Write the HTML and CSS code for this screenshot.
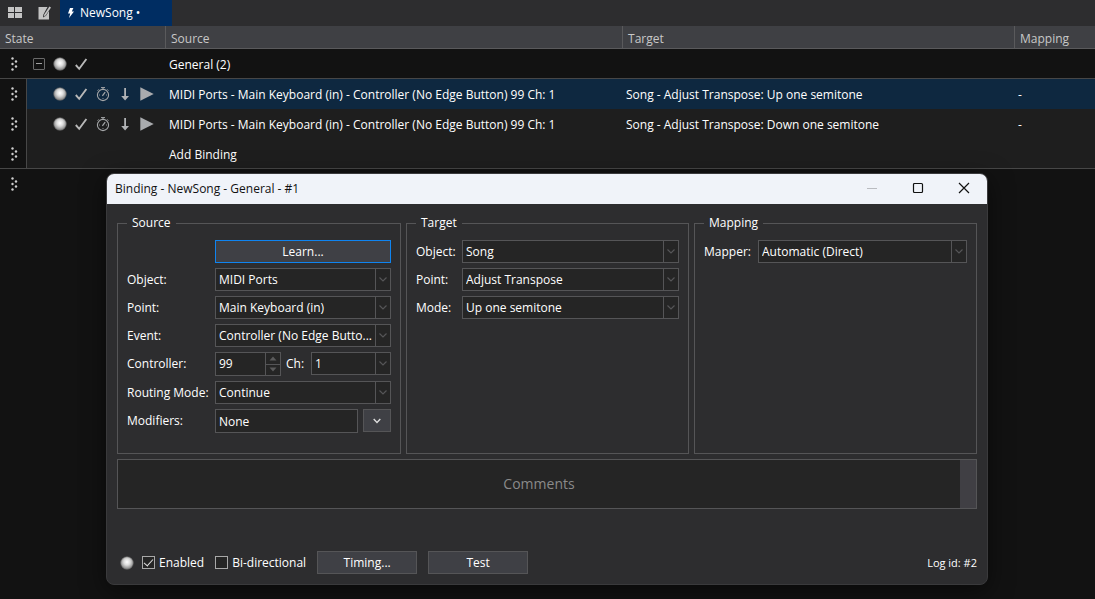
FILE: index.html
```html
<!DOCTYPE html>
<html lang="en">

<head>
    <meta charset="UTF-8">
    <meta name="viewport" content="width=device-width, initial-scale=1.0">
    <title>Bindings - NewSong</title>
    <link rel="stylesheet" href="styles.css">
</head>

<body>
    <!-- shared icons -->
    <svg class="sprite" aria-hidden="true">
        <defs>
            <radialGradient id="ballFill" cx="0.5" cy="0.42" r="0.55">
                <stop offset="0" stop-color="#fff" />
                <stop offset="0.45" stop-color="#dcdcdc" />
                <stop offset="1" stop-color="#858585" />
            </radialGradient>
            <symbol id="grip" viewBox="0 0 8 16">
                <g fill="#d0d0d0">
                    <circle cx="2.5" cy="2.5" r="1.2" />
                    <circle cx="6" cy="5.5" r="1.2" />
                    <circle cx="2.5" cy="8" r="1.2" />
                    <circle cx="6" cy="10.5" r="1.2" />
                    <circle cx="2.5" cy="13.5" r="1.2" />
                </g>
            </symbol>
            <symbol id="ball" viewBox="0 0 14 14">
                <circle cx="7" cy="7" r="6.3" fill="url(#ballFill)" stroke="#666" stroke-width="0.6" />
            </symbol>
            <symbol id="check" viewBox="0 0 13 14">
                <path d="M0.8 8l3.4 3.8L11.4 2" fill="none" stroke="#b8b8b8" stroke-width="1.9" />
            </symbol>
            <symbol id="watch" viewBox="0 0 14 16">
                <g fill="none" stroke="#a4a6a8">
                    <circle cx="7" cy="9" r="5.6" stroke-width="1.1" />
                    <path d="M5 1.6h4M7 1.6v1.8M11.2 3.4l1.2 1.2M2.8 3.4L1.6 4.6" />
                    <path d="M6.4 9.8l2.8-3.6" stroke-width="1.3" />
                    <path d="M3 9h1M10 9h1M7 12v1" stroke-width="0.8" />
                </g>
            </symbol>
            <symbol id="down" viewBox="0 0 14 14">
                <path d="M6.2 1h1.8v8h3L7.1 13.5 3.2 9h3z" fill="#b0b2b5" />
            </symbol>
            <symbol id="play" viewBox="0 0 14 14">
                <path d="M0.3 0.3L13.7 7 0.3 13.7z" fill="#a9abae" />
            </symbol>
        </defs>
    </svg>

    <nav class="tabBar">
        <button class="toolBtn" aria-label="Layout">
            <svg width="14" height="12" viewBox="0 0 14 12">
                <path d="M0 0h6v5H0zM7 0h7v5H7zM0 6h6v5H0zM7 6h7v5H7z" fill="#c4c4c4" />
            </svg>
        </button>
        <button class="toolBtn" aria-label="Edit">
            <svg width="14" height="14" viewBox="0 0 14 14">
                <path d="M0.5 1h9L5.4 8.4 5 11.6 8 9.8 11 5v8.5H0.5z" fill="#c4c4c4" />
                <path d="M11.4 0.6l1.6 1L7.6 9.6 6 10.6l0.2-2z" fill="#c4c4c4" />
            </svg>
        </button>
        <a class="tab" href="#">
            <svg width="6" height="10" viewBox="0 0 6 10">
                <path d="M2 0h3.4L3.8 3.4H6L1 10 2.2 5.4H0z" fill="#fff" />
            </svg>
            NewSong •
        </a>
    </nav>

    <table class="bindings">
        <colgroup>
            <col class="colGrip">
            <col class="colState">
            <col class="colSource">
            <col class="colTarget">
            <col>
        </colgroup>
        <thead>
            <tr>
                <th colspan="2">State</th>
                <th>Source</th>
                <th>Target</th>
                <th>Mapping</th>
            </tr>
        </thead>
        <tbody>
            <tr class="group">
                <td class="grip"><svg><use href="#grip" /></svg></td>
                <td class="icons">
                    <div class="state">
                        <button class="collapse" aria-label="Collapse"></button>
                        <svg class="ball"><use href="#ball" /></svg>
                        <svg class="check"><use href="#check" /></svg>
                    </div>
                </td>
                <td>General (2)</td>
                <td></td>
                <td></td>
            </tr>
            <tr class="item active">
                <td class="grip"><svg><use href="#grip" /></svg></td>
                <td class="icons">
                    <div class="state">
                        <svg class="ball"><use href="#ball" /></svg>
                        <svg class="check"><use href="#check" /></svg>
                        <svg class="watch"><use href="#watch" /></svg>
                        <svg class="down"><use href="#down" /></svg>
                        <svg class="play"><use href="#play" /></svg>
                    </div>
                </td>
                <td>MIDI Ports - Main Keyboard (in) - Controller (No Edge Button) 99 Ch: 1</td>
                <td>Song - Adjust Transpose: Up one semitone</td>
                <td>-</td>
            </tr>
            <tr class="item">
                <td class="grip"><svg><use href="#grip" /></svg></td>
                <td class="icons">
                    <div class="state">
                        <svg class="ball"><use href="#ball" /></svg>
                        <svg class="check"><use href="#check" /></svg>
                        <svg class="watch"><use href="#watch" /></svg>
                        <svg class="down"><use href="#down" /></svg>
                        <svg class="play"><use href="#play" /></svg>
                    </div>
                </td>
                <td>MIDI Ports - Main Keyboard (in) - Controller (No Edge Button) 99 Ch: 1</td>
                <td>Song - Adjust Transpose: Down one semitone</td>
                <td>-</td>
            </tr>
            <tr class="item last">
                <td class="grip"><svg><use href="#grip" /></svg></td>
                <td></td>
                <td>Add Binding</td>
                <td></td>
                <td></td>
            </tr>
            <tr>
                <td class="grip"><svg><use href="#grip" /></svg></td>
                <td></td>
                <td></td>
                <td></td>
                <td></td>
            </tr>
        </tbody>
    </table>

    <div class="dialog" role="dialog" aria-labelledby="dialogTitle">
        <header class="titleBar">
            <h1 id="dialogTitle">Binding - NewSong - General - #1</h1>
            <button class="winBtn" aria-label="Minimize" disabled>
                <svg width="12" height="12" viewBox="0 0 12 12"><path d="M1 6.5h10" stroke="#b9bbc0" /></svg>
            </button>
            <button class="winBtn" aria-label="Maximize">
                <svg width="12" height="12" viewBox="0 0 12 12"><rect x="1.5" y="1.5" width="9" height="9" rx="1" fill="none" stroke="#111" stroke-width="1.2" /></svg>
            </button>
            <button class="winBtn" aria-label="Close">
                <svg width="12" height="12" viewBox="0 0 12 12"><path d="M1 1l10 10M11 1L1 11" stroke="#111" stroke-width="1.2" /></svg>
            </button>
        </header>

        <form class="content">
            <div class="groups">
                <fieldset class="source">
                    <legend>Source</legend>
                    <div class="fields">
                        <button type="button" class="btn learn">Learn...</button>
                        <label for="srcObject">Object:</label>
                        <select id="srcObject"><option>MIDI Ports</option></select>
                        <label for="srcPoint">Point:</label>
                        <select id="srcPoint"><option>Main Keyboard (in)</option></select>
                        <label for="srcEvent">Event:</label>
                        <select id="srcEvent"><option>Controller (No Edge Butto...</option></select>
                        <label for="controller">Controller:</label>
                        <div class="row">
                            <div class="spin">
                                <input type="text" id="controller" value="99">
                                <div class="steps">
                                    <button type="button" aria-label="Increase"><svg width="8" height="5" viewBox="0 0 8 5"><path d="M0.5 4.5L4 0.5l3.5 4z" fill="#5a5a5b" /></svg></button>
                                    <button type="button" aria-label="Decrease"><svg width="8" height="5" viewBox="0 0 8 5"><path d="M0.5 0.5L4 4.5l3.5-4z" fill="#5a5a5b" /></svg></button>
                                </div>
                            </div>
                            <label for="channel">Ch:</label>
                            <select id="channel"><option>1</option></select>
                        </div>
                        <label for="routing">Routing Mode:</label>
                        <select id="routing"><option>Continue</option></select>
                        <label for="modifiers">Modifiers:</label>
                        <div class="row">
                            <input type="text" class="textBox" id="modifiers" value="None">
                            <button type="button" class="btn drop" aria-label="Choose modifiers">
                                <svg width="8" height="6" viewBox="0 0 8 6"><path d="M0.7 1L4 4.4 7.3 1" fill="none" stroke="#ddd" stroke-width="1.4" /></svg>
                            </button>
                        </div>
                    </div>
                </fieldset>
                <fieldset class="target">
                    <legend>Target</legend>
                    <div class="fields">
                        <label for="tgtObject">Object:</label>
                        <select id="tgtObject"><option>Song</option></select>
                        <label for="tgtPoint">Point:</label>
                        <select id="tgtPoint"><option>Adjust Transpose</option></select>
                        <label for="tgtMode">Mode:</label>
                        <select id="tgtMode"><option>Up one semitone</option></select>
                    </div>
                </fieldset>
                <fieldset class="mapping">
                    <legend>Mapping</legend>
                    <div class="fields">
                        <label for="mapper">Mapper:</label>
                        <select id="mapper"><option>Automatic (Direct)</option></select>
                    </div>
                </fieldset>
            </div>

            <div class="comments">
                <textarea placeholder="Comments" aria-label="Comments"></textarea>
                <div class="scroll"></div>
            </div>

            <footer class="actions">
                <svg class="ball"><use href="#ball" /></svg>
                <label class="tick"><input type="checkbox" checked>Enabled</label>
                <label class="tick"><input type="checkbox">Bi-directional</label>
                <button type="button" class="btn">Timing...</button>
                <button type="button" class="btn">Test</button>
                <span class="logId">Log id: #2</span>
            </footer>
        </form>
    </div>
</body>

</html>
```

FILE: styles.css
```css
* {
    margin: 0;
    padding: 0;
    box-sizing: border-box;
}

body {
    min-height: 100vh;
    background: #121212;
    color: #fff;
    font: 12px/18px "Open Sans", "Noto Sans", sans-serif;
    overflow: hidden;
}

button,
input,
select,
textarea {
    font: inherit;
    color: inherit;
    border-radius: 0;
    outline: none;
}

svg {
    display: block;
    flex: none;
}

.sprite {
    position: absolute;
    width: 0;
    height: 0;
}

/* tab bar */
.tabBar {
    display: flex;
    height: 26px;
    background: #2d2d2f;
}

.toolBtn {
    display: flex;
    align-items: center;
    justify-content: center;
    width: 30px;
    border: none;
    background: none;
}

.tab {
    display: flex;
    align-items: center;
    gap: 6px;
    width: 112px;
    padding-left: 8px;
    background: #002d62;
    color: #fff;
    text-decoration: none;
}

/* binding list */
.bindings {
    width: 100%;
    table-layout: fixed;
    border-collapse: separate;
    border-spacing: 0;
}

.colGrip {
    width: 27px;
}

.colState {
    width: 139px;
}

.colSource {
    width: 457px;
}

.colTarget {
    width: 392px;
}

.bindings th {
    height: 23px;
    padding: 4px 0 0 5px;
    background: #3f4044;
    border-right: 1px solid #5a5a5c;
    border-bottom: 1px solid #5a5a5c;
    color: #c8c8c8;
    font-weight: normal;
    text-align: left;
}

.bindings th:last-child {
    border-right: none;
}

.bindings td {
    height: 30px;
    padding: 2px 0 0 3px;
    white-space: nowrap;
}

.bindings .icons {
    padding-top: 0;
}

.bindings .grip {
    padding: 0 0 0 10px;
}

.grip svg {
    width: 8px;
    height: 16px;
}

.group td,
.last td {
    border-bottom: 1px solid #474747;
}

.item td {
    background: #1e1e1e;
}

.item .grip {
    background: #121212;
    border-right: 1px solid #474747;
}

.item.active td:not(.grip) {
    background: #0e2840;
}

.state {
    display: flex;
    align-items: center;
    gap: 8px;
    padding-left: 3px;
}

.item .state {
    padding-left: 23px;
}

.collapse {
    display: flex;
    align-items: center;
    justify-content: center;
    width: 12px;
    height: 12px;
    border: 1px solid #6a6a6a;
    border-radius: 1px;
    background: none;
}

.collapse::before {
    content: "";
    width: 6px;
    height: 1px;
    background: #a0a0a0;
}

.ball,
.down,
.play {
    width: 14px;
    height: 14px;
}

.check {
    width: 13px;
    height: 14px;
}

.watch {
    width: 14px;
    height: 16px;
}

/* dialog window, lies over the list */
.dialog {
    position: absolute;
    top: 173px;
    left: 106px;
    right: 107px;
    overflow: hidden;
    background: #2d2d2f;
    border: 1px solid #3a3a3c;
    border-radius: 8px;
    box-shadow: 0 6px 24px rgba(0, 0, 0, 0.5);
}

.titleBar {
    display: flex;
    height: 30px;
    padding-left: 8px;
    background: #f0f3f9;
    color: #111;
}

.titleBar h1 {
    flex: 1;
    font-size: 12px;
    font-weight: normal;
    line-height: 30px;
}

.winBtn {
    display: flex;
    align-items: center;
    justify-content: center;
    width: 46px;
    height: 28px;
    border: none;
    background: none;
}

.content {
    padding: 10px;
}

.groups {
    display: grid;
    grid-template-columns: 284fr 283fr 283fr;
    gap: 5px;
}

fieldset {
    min-width: 0;
    padding: 0 9px 20px;
    border: 1px solid #555557;
}

legend {
    padding: 0 5px;
}

.fields {
    display: grid;
    grid-template-columns: 88px minmax(0, 1fr);
    gap: 5px 0;
    align-items: center;
    padding-top: 8px;
}

.target .fields {
    grid-template-columns: 46px minmax(0, 1fr);
}

.mapping .fields {
    grid-template-columns: 54px minmax(0, 1fr);
}

select {
    width: 100%;
    min-width: 0;
    height: 23px;
    padding: 0 16px 0 3px;
    appearance: none;
    border: 1px solid #555557;
    background-color: #252525;
    background-image: url("data:image/svg+xml,%3Csvg xmlns='http://www.w3.org/2000/svg' width='15' height='21'%3E%3Cpath d='M0.5 0v21' stroke='%23555557'/%3E%3Cpath d='M4.5 8.5l3.5 3.5 3.5-3.5' fill='none' stroke='%23555557' stroke-width='1.2'/%3E%3C/svg%3E");
    background-repeat: no-repeat;
    background-position: right center;
}

.btn {
    width: 100px;
    height: 23px;
    border: 1px solid #555557;
    background: #3f4045;
}

.learn {
    grid-column: 2;
    width: 100%;
    border-color: #0f84f0;
}

.row {
    display: flex;
    gap: 5px;
}

.row label {
    width: 20px;
    line-height: 23px;
}

.row select {
    flex: 1;
}

.spin {
    display: flex;
    width: 66px;
    height: 24px;
    border: 1px solid #555557;
    background: #252525;
}

.spin input {
    flex: 1;
    min-width: 0;
    padding-left: 3px;
    border: none;
    background: none;
}

.steps {
    display: flex;
    flex-direction: column;
    width: 15px;
    border-left: 1px solid #555557;
}

.steps button {
    display: flex;
    flex: 1;
    align-items: center;
    justify-content: center;
    border: none;
    background: none;
}

.steps button + button {
    border-top: 1px solid #555557;
}

.textBox {
    flex: 1;
    min-width: 0;
    height: 24px;
    padding-left: 3px;
    border: 1px solid #555557;
    background: #252525;
}

.drop {
    display: flex;
    align-items: center;
    justify-content: center;
    width: 28px;
}

.comments {
    display: flex;
    height: 50px;
    margin-top: 5px;
    border: 1px solid #555557;
    background: #252525;
}

.comments textarea {
    flex: 1;
    border: none;
    background: none;
    font-size: 14px;
    line-height: 48px;
    text-align: center;
    resize: none;
    overflow: hidden;
}

.comments textarea::placeholder {
    color: #8a8a8a;
}

.scroll {
    width: 16px;
    background: #403f44;
}

.actions {
    display: flex;
    align-items: center;
    gap: 11px;
    margin-top: 42px;
    padding-left: 3px;
}

.actions .ball {
    margin-right: -3px;
}

.tick {
    display: flex;
    align-items: center;
    gap: 4px;
}

.tick input {
    display: flex;
    align-items: center;
    justify-content: center;
    width: 13px;
    height: 13px;
    appearance: none;
    border: 1px solid #a8a8a8;
    background: #252525;
}

.tick input:checked::before {
    content: "";
    width: 8px;
    height: 4px;
    margin-bottom: 2px;
    border: solid #e0e0e0;
    border-width: 0 0 1px 1px;
    transform: rotate(-48deg);
}

.logId {
    margin-left: auto;
    font-size: 11px;
}
```
